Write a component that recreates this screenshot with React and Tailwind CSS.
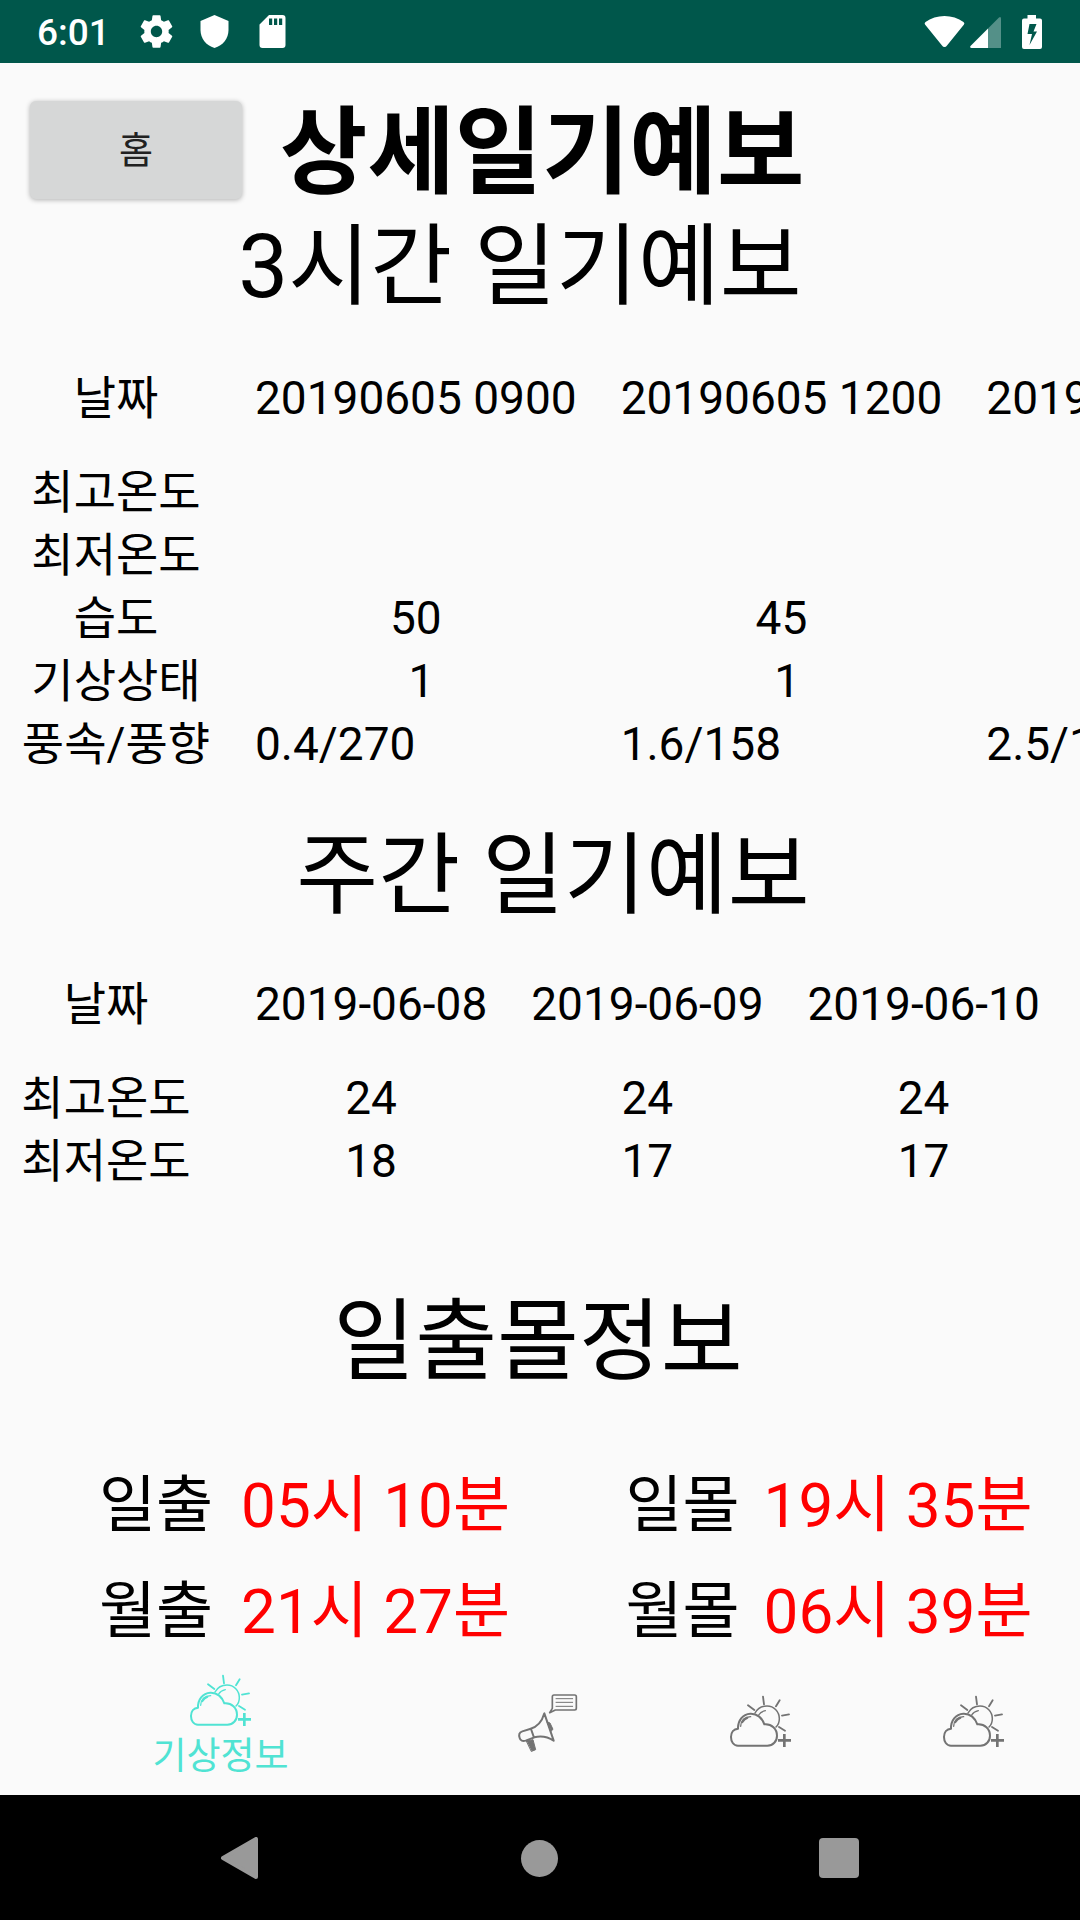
import React from "react";

const hourly = {
  dates: ["20190605 0900", "20190605 1200", "20190605 1500"],
  rows: [
    { label: "최고온도", values: ["", "", ""] },
    { label: "최저온도", values: ["", "", ""] },
    { label: "습도", values: ["50", "45", "45"] },
    { label: "기상상태", values: [" 1", " 1", " 1"] },
    { label: "풍속/풍향", values: ["0.4/270", "1.6/158", "2.5/180"], left: true },
  ],
};

const weekly = {
  dates: ["2019-06-08", "2019-06-09", "2019-06-10"],
  rows: [
    { label: "최고온도", values: ["24", "24", "24"] },
    { label: "최저온도", values: ["18", "17", "17"] },
  ],
};

const sunTimes = [
  { label: "일출", value: "05시 10분" },
  { label: "일몰", value: "19시 35분" },
  { label: "월출", value: "21시 27분" },
  { label: "월몰", value: "06시 39분" },
];

function StatusBar() {
  return (
    <header className="flex h-[63px] items-center justify-between bg-[#00574b] pr-[38px] pl-[37px] text-white">
      <div className="flex items-center">
        <span className="mr-[26px] w-[74px] pt-[3px] text-[37px] font-medium">6:01</span>
        <svg className="mr-[19px] size-[39px]" viewBox="0 0 24 24" fill="currentColor" aria-hidden="true">
          <path d="M19.43 12.98c.04-.32.07-.64.07-.98s-.03-.66-.07-.98l2.11-1.65c.19-.15.24-.42.12-.64l-2-3.46c-.12-.22-.39-.3-.61-.22l-2.49 1c-.52-.4-1.08-.73-1.69-.98l-.38-2.65C14.46 2.18 14.25 2 14 2h-4c-.25 0-.46.18-.49.42l-.38 2.65c-.61.25-1.17.59-1.69.98l-2.49-1c-.23-.09-.49 0-.61.22l-2 3.46c-.13.22-.07.49.12.64l2.11 1.65c-.04.32-.07.65-.07.98s.03.66.07.98l-2.11 1.65c-.19.15-.24.42-.12.64l2 3.46c.12.22.39.3.61.22l2.49-1c.52.4 1.08.73 1.69.98l.38 2.65c.03.24.24.42.49.42h4c.25 0 .46-.18.49-.42l.38-2.65c.61-.25 1.17-.59 1.69-.98l2.49 1c.23.09.49 0 .61-.22l2-3.46c.12-.22.07-.49-.12-.64l-2.11-1.65zM12 15.5c-1.93 0-3.500-1.570-3.500-3.500s1.570-3.500 3.500-3.500 3.500 1.570 3.500 3.500-1.570 3.500-3.500 3.500z" />
        </svg>
        <svg className="mr-[19px] size-[39px]" viewBox="0 0 39 39" fill="currentColor" aria-hidden="true">
          <path d="M19.500 3 33.500 9V18C33.500 26.500 28 33.500 19.500 36 11 33.500 5.500 26.500 5.500 18V9Z" />
        </svg>
        <svg className="size-[39px]" viewBox="0 0 39 39" fill="currentColor" fillRule="evenodd" aria-hidden="true">
          <path d="M16 3H29.500A3 3 0 0 1 32.500 6V33A3 3 0 0 1 29.500 36H9.500A3 3 0 0 1 6.500 33V12.500ZM16 6.500V13H19.200V6.500ZM21 6.500V13H24.200V6.500ZM26 6.500V13H29.200V6.500Z" />
        </svg>
      </div>
      <div className="flex items-center">
        <svg className="mr-[5px] h-[35px] w-[41px]" viewBox="0 0 41 35" fill="currentColor" aria-hidden="true">
          <path d="M20.500 33Q19 33 18 31.500L1 10.500Q0 9 1.500 8C12 0 29 0 39.500 8Q41 9 40 10.500L23 31.500Q22 33 20.500 33Z" />
        </svg>
        <svg className="mr-5 h-[35px] w-8" viewBox="0 0 32 35" aria-hidden="true">
          <path d="M29 3.500Q31 2 31 5V34H18V14.500Z" fill="#549088" />
          <path d="M18 14.500V34H1.500Q-.5 34 .5 32Z" fill="#fff" />
        </svg>
        <svg className="h-[35px] w-5" viewBox="0 0 20 35" fill="currentColor" fillRule="evenodd" aria-hidden="true">
          <path d="M5.500 1H14V4.500H18Q20 4.500 20 6.500V33Q20 35 18 35H2Q0 35 0 33V6.500Q0 4.500 2 4.500H5.500ZM7.500 10 5.500 20H10L7.500 31 15 17.500H11.500L14.500 10Z" />
        </svg>
      </div>
    </header>
  );
}

function WeatherIcon() {
  return (
    <svg className="size-[63px]" viewBox="57 57 189 189" fill="none" stroke="currentColor" strokeLinecap="round" strokeLinejoin="round" aria-hidden="true">
      <path strokeWidth="6" d="M84 224C70 224 63 211 63 198 63 184 71 174 84 173 83 149 98 129 121 128 142 127 157 142 163 160 185 158 201 174 201 194 201 211 189 224 172 224Z" />
      <path strokeWidth="4" d="M92 166C93 149 104 138 122 137M97 155Q104 144 113 141" />
      <path strokeWidth="4.500" d="M135 126C144 110 156 105 171 105 192 105 208 122 208 143Q208 158 198 168" />
      <path strokeWidth="4" d="M146 132Q152 122 166 119" />
      <path strokeWidth="5.500" d="M114 103 133 117M159 77 162 100M209 88 198 106M216 134 237 130M207 168 225 179" />
      <path strokeWidth="8" strokeLinecap="butt" d="M204 208H243M223 189V228" />
    </svg>
  );
}

function MegaphoneIcon() {
  return (
    <svg className="size-[63px]" viewBox="49 57 189 189" fill="none" stroke="currentColor" strokeLinecap="round" strokeLinejoin="round" aria-hidden="true">
      <path strokeWidth="6" d="M134 127C127 152 111 169 91 174L68 181C58 184 57 192 60 201 62 209 69 212 78 209L104 199C125 194 145 198 162 209L134 127ZM94 174 103 200" />
      <path fill="currentColor" strokeWidth="3" d="M143 153 151 156 160 175 155 180ZM81 210 100 206 108 236 96 241Z" />
      <path strokeWidth="5" d="M163 72H225Q230 72 230 77V112Q230 117 225 117H167L150 125 158 112V77Q158 72 163 72Z" />
      <path strokeWidth="3" d="M169 83H219M169 94H219M169 106H219" />
    </svg>
  );
}

function ForecastTable({ data, title, labelWidth }) {
  return (
    <div className="overflow-x-auto [scrollbar-width:none]">
      <table aria-label={title} className="border-collapse text-[46px] leading-[63px] whitespace-pre">
        <thead>
          <tr className="h-[126px]">
            <th scope="col" className="p-0 pl-5 font-normal">
              <div className={labelWidth}>날짜</div>
            </th>
            {data.dates.map((d) => (
              <th key={d} scope="col" className="p-0 pr-[42px] pl-0.5 font-normal">{d}</th>
            ))}
          </tr>
        </thead>
        <tbody>
          {data.rows.map((r) => (
            <tr key={r.label} className="h-[63px]">
              <th scope="row" className="p-0 pl-5 font-normal">
                <div className={labelWidth}>{r.label}</div>
              </th>
              {r.values.map((v, i) => (
                <td key={i} className={r.left ? "p-0 pr-[42px] pl-0.5 text-left" : "p-0 pr-[42px] pl-0.5 text-center"}>{v}</td>
              ))}
            </tr>
          ))}
        </tbody>
      </table>
    </div>
  );
}

export default function App() {
  return (
    <div className="flex min-h-screen flex-col bg-[#fafafa] font-[Roboto,'Noto_Sans_CJK_KR',sans-serif] text-black">
      <StatusBar />
      <main className="flex-1">
        <div className="flex h-[138px] items-start pl-[30px]">
          <button type="button" className="mt-[38px] h-[98px] w-[212px] rounded-md bg-[#d6d7d7] pt-1 text-[37px] text-[#212121] shadow-[0_1px_5px_rgba(0,0,0,0.3)]">
            홈
          </button>
          <h1 className="mt-[22px] ml-[38px] text-[95px] leading-[137px] font-bold whitespace-nowrap">상세일기예보</h1>
        </div>
        <h2 className="pr-10 text-center text-[89px] leading-[131px]">3시간 일기예보</h2>
        <div className="pt-[3px]">
          <ForecastTable data={hourly} title="3시간 일기예보" labelWidth="mr-[41px] w-[192px]" />
        </div>
        <h2 className="pt-[34px] pl-[26px] text-center text-[89px] leading-[131px]">주간 일기예보</h2>
        <ForecastTable data={weekly} title="주간 일기예보" labelWidth="mr-[61px] w-[172px]" />
        <h2 className="pt-[83px] pr-1 text-center text-[89px] leading-[131px]">일출몰정보</h2>
        <dl className="grid grid-cols-2 gap-y-[34px] pt-[63px] pl-[99px] text-[62px] leading-[72px] whitespace-nowrap">
          {sunTimes.map((s) => (
            <div key={s.label} className="flex odd:gap-7 even:gap-6 even:pl-9">
              <dt>{s.label}</dt>
              <dd className="text-[#ff0000]">{s.value}</dd>
            </div>
          ))}
        </dl>
      </main>
      <nav className="grid h-[147px] grid-cols-[441fr_213fr_213fr_213fr] text-[#737373]">
        <button type="button" className="flex flex-col items-center pt-[21px] text-[37px] leading-[50px] text-[#50e3d3]">
          <WeatherIcon />
          기상정보
        </button>
        <button type="button" aria-label="알림" className="flex items-center justify-center">
          <MegaphoneIcon />
        </button>
        <button type="button" aria-label="날씨 추가" className="flex items-center justify-center">
          <WeatherIcon />
        </button>
        <button type="button" aria-label="날씨 더보기" className="flex items-center justify-center">
          <WeatherIcon />
        </button>
      </nav>
      <footer className="grid h-[126px] grid-cols-3 bg-black pr-[92px] pl-[91px] text-[#999999]">
        <button type="button" aria-label="뒤로" className="flex items-center justify-center">
          <svg className="size-[42px]" viewBox="0 0 42 42" fill="currentColor" stroke="currentColor" strokeWidth="4" strokeLinejoin="round">
            <path d="M3 21 36 2V40Z" />
          </svg>
        </button>
        <button type="button" aria-label="홈 화면" className="flex items-center justify-center">
          <span className="size-[37px] rounded-full bg-[#999999]" />
        </button>
        <button type="button" aria-label="최근 앱" className="flex items-center justify-center">
          <span className="size-10 rounded-sm bg-[#999999]" />
        </button>
      </footer>
    </div>
  );
}
